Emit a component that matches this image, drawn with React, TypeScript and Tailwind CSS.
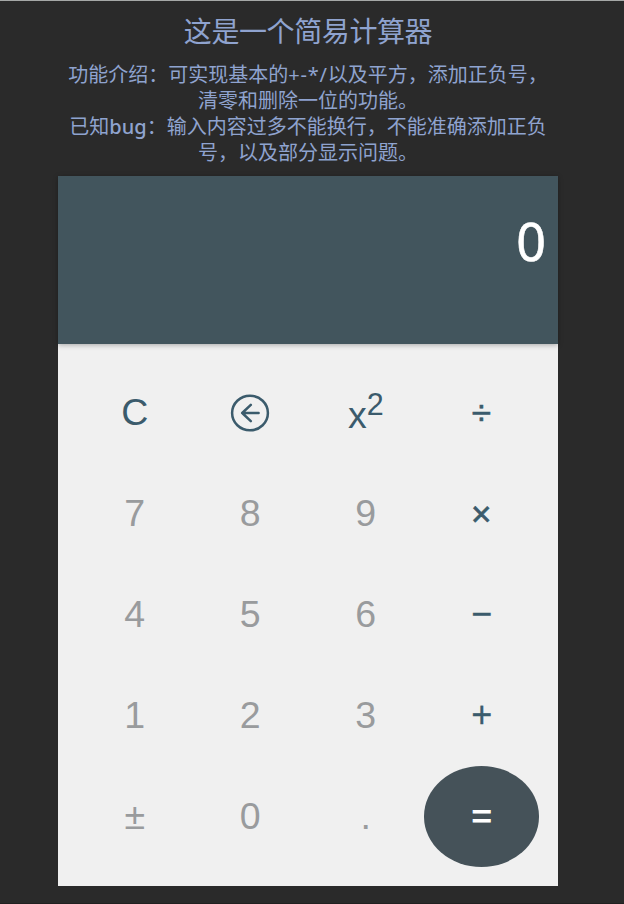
import type { ReactNode } from "react";

type Tone = "digit" | "action" | "operator" | "thin" | "equals";

const tones: Record<Tone, string> = {
  digit: "text-[#999b9d]",
  action: "pb-px text-[#3b5b6c]",
  operator: "pb-[2px] text-[35px] text-[#3b5b6c] [-webkit-text-stroke:0.7px_#3b5b6c]",
  thin: "pb-px pl-px text-[36px] text-[#3b5b6c] [-webkit-text-stroke:0.3px_#3b5b6c]",
  equals: "rounded-[50%] bg-[#455259] pb-[2px] pl-px text-[35px] text-white [-webkit-text-stroke:0.9px_white]",
};

function BackIcon() {
  return (
    <svg
      width="40"
      height="40"
      viewBox="0 0 40 40"
      fill="none"
      stroke="currentColor"
      strokeWidth="2.5"
      strokeLinecap="round"
      strokeLinejoin="round"
    >
      <ellipse cx="20" cy="20" rx="17.9" ry="17.3" />
      <path d="M28.6 20H12.2M20.8 11.9 12.2 20l8.6 8.1" />
    </svg>
  );
}

const keys: { id: string; label: ReactNode; tone: Tone }[] = [
  { id: "clear", label: "C", tone: "action" },
  { id: "back", label: <BackIcon />, tone: "action" },
  {
    id: "square",
    label: (
      <span className="flex items-baseline">
        <span className="translate-y-[3px]">x</span>
        <span className="-translate-y-[10px] text-[30.5px]">2</span>
      </span>
    ),
    tone: "action",
  },
  { id: "divide", label: "÷", tone: "operator" },
  { id: "7", label: "7", tone: "digit" },
  { id: "8", label: "8", tone: "digit" },
  { id: "9", label: "9", tone: "digit" },
  { id: "multiply", label: "×", tone: "operator" },
  { id: "4", label: "4", tone: "digit" },
  { id: "5", label: "5", tone: "digit" },
  { id: "6", label: "6", tone: "digit" },
  { id: "minus", label: "−", tone: "thin" },
  { id: "1", label: "1", tone: "digit" },
  { id: "2", label: "2", tone: "digit" },
  { id: "3", label: "3", tone: "digit" },
  { id: "plus", label: "+", tone: "thin" },
  { id: "sign", label: "±", tone: "digit" },
  { id: "0", label: "0", tone: "digit" },
  { id: "dot", label: ".", tone: "digit" },
  { id: "equals", label: "=", tone: "equals" },
];

export default function App() {
  return (
    <div className="h-[904px] w-[624px] overflow-hidden border-t border-b border-t-[#a5a8a7] border-b-[#202020] bg-[#2a2a2a] pl-[58px] font-['Noto_Sans','Noto_Sans_CJK_SC',sans-serif]">
      <main className="flex w-[500px] flex-col">
        <header className="flex h-[175px] flex-col text-center text-[#8fa3cf]">
          <h1 className="mt-[10px] h-10 text-[28px] leading-10 tracking-[-0.4px]">这是一个简易计算器</h1>
          <div className="mt-[11px] text-[20px] leading-[26px] whitespace-nowrap">
            <p>
              功能介绍：可实现基本的<span className="tracking-[0.8px]">+-*/</span>以及平方，添加正负号，
            </p>
            <p>清零和删除一位的功能。</p>
            <p>
              已知<span className="font-medium">bug</span>：输入内容过多不能换行，不能准确添加正负
            </p>
            <p>号，以及部分显示问题。</p>
          </div>
        </header>
        <output className="z-10 flex h-[168px] justify-end bg-[#42555d] pt-[30px] pr-[12px] text-[52px] leading-[70px] text-white shadow-[0_1px_5px_rgba(0,0,0,0.3)] [-webkit-text-stroke:0.6px_white]">
          0
        </output>
        <section className="grid h-[542px] grid-cols-4 grid-rows-5 bg-[#f0f0f0] px-[19px] py-[19px] font-['Liberation_Sans',sans-serif] text-[37.5px] leading-none">
          {keys.map((key) => (
            <button key={key.id} className={`flex items-center justify-center ${tones[key.tone]}`}>
              {key.label}
            </button>
          ))}
        </section>
      </main>
    </div>
  );
}
